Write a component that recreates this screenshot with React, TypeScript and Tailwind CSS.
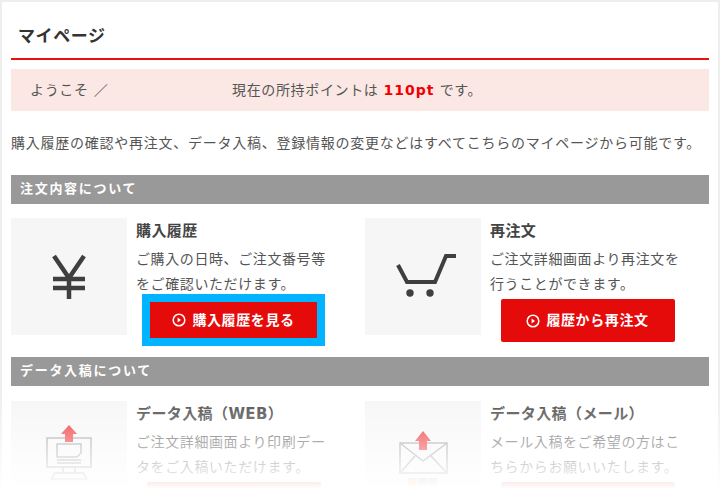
const BASE_FONT = '"DejaVu Sans","Noto Sans CJK JP",sans-serif';

const YenIcon = () => (
  <svg width="116" height="116" viewBox="0 0 116 116" fill="none" stroke="#3f3f3f" strokeWidth="4.5">
    <path d="M43 38 58 60 73 38M58 60V81M42 61H74M42 70H74" />
  </svg>
);

const CartIcon = () => (
  <svg width="116" height="116" viewBox="0 0 116 116" fill="none" stroke="#3f3f3f" strokeWidth="4">
    <path d="M33 47 42 64H70L81 38H91" />
    <circle cx="45" cy="75" r="3.7" fill="#3f3f3f" stroke="none" />
    <circle cx="65" cy="75" r="3.7" fill="#3f3f3f" stroke="none" />
  </svg>
);

const WebIcon = () => (
  <svg width="116" height="116" viewBox="0 0 116 116" fill="none" stroke="#999" strokeWidth="1.5">
    <rect x="36" y="37" width="44" height="29" />
    <path d="M46 43H70V52L66 56H46ZM46 59H70M46 62H70M52 66V72M64 66V72M40 78 44 72H72L76 78Z" />
    <path d="M58 24 66 33H62V41H54V33H50Z" fill="#ee2222" stroke="none" />
  </svg>
);

const MailIcon = () => (
  <svg width="116" height="116" viewBox="0 0 116 116" fill="none" stroke="#999" strokeWidth="1.5">
    <rect x="35" y="42" width="47" height="30" />
    <path d="M35 42 58 60 82 42M35 72 50 55M82 72 66 55" />
    <path d="M58 30 66 40H62V49H54V40H50Z" fill="#ee2222" stroke="none" />
    <rect x="43" y="77" width="9" height="8" fill="#f5a060" stroke="none" />
    <rect x="53" y="77" width="9" height="8" fill="#88aadd" stroke="none" />
    <rect x="63" y="77" width="9" height="8" fill="#99bb99" stroke="none" />
  </svg>
);

const PlayCircle = () => (
  <svg width="14" height="14" viewBox="0 0 14 14" fill="none" stroke="#fff" strokeWidth="1.5">
    <circle cx="7" cy="7" r="5.8" />
    <path d="M5.6 4.6 9 7 5.6 9.4Z" fill="#fff" stroke="none" />
  </svg>
);

type CardProps = {
  icon: React.ReactNode;
  title: string;
  text: string;
  button?: string;
  focused?: boolean;
};

const Card = ({ icon, title, text, button, focused }: CardProps) => (
  <div className="flex gap-[9px]">
    <div className="h-[117px] w-[116px] shrink-0 bg-[#f6f6f6]">{icon}</div>
    <div className="w-[195px]">
      <h3 className="text-[15px] leading-[26px] font-bold tracking-[0.4px] text-[#444]">{title}</h3>
      <p className="mt-[3px] text-[14px] leading-[25px] tracking-[0.6px] text-[#555]">{text}</p>
      {focused ? (
        <a className="mx-auto mt-[5px] flex h-[36px] w-[167px] items-center justify-center gap-[6px] bg-[#e60b0b] text-[14px] font-bold tracking-[0.6px] text-white outline-8 outline-[#00b4ff]">
          <PlayCircle />
          {button}
        </a>
      ) : (
        <a className="mx-auto mt-[2px] flex h-[43px] w-[174px] items-center justify-center gap-[6px] rounded-[2px] bg-[#e60b0b] text-[14px] font-bold tracking-[0.6px] text-white">
          {button && <PlayCircle />}
          {button}
        </a>
      )}
    </div>
  </div>
);

const SectionBar = ({ children }: { children: React.ReactNode }) => (
  <h2 className="h-[29px] bg-[#999] pl-[9px] text-[13px] leading-[28px] font-bold tracking-[1.7px] text-white">
    {children}
  </h2>
);

export default function App() {
  return (
    <div
      className="relative h-[500px] w-[720px] overflow-hidden bg-white"
      style={{ fontFamily: BASE_FONT }}
    >
      <div className="h-[520px] border-2 border-[#eee] px-[9px]">
        <h1 className="mt-[21px] h-[37px] border-b-2 border-[#e81010] pl-[7px] text-[17px] leading-[26px] font-bold tracking-[0.6px] text-[#333]">
          マイページ
        </h1>
        <div className="mt-[9px] flex h-[42px] items-center bg-[#fbe8e4] pl-[19px] text-[14px] tracking-[0.65px] text-[#555]">
          <span className="w-[202px]">ようこそ ／</span>
          <span>
            現在の所持ポイントは <strong className="text-[#f00000] tracking-[1px]">110pt</strong> です。
          </span>
        </div>
        <p className="mt-[20px] h-[44px] text-[14px] leading-[25px] tracking-[0.75px] text-[#555]">
          購入履歴の確認や再注文、データ入稿、登録情報の変更などはすべてこちらのマイページから可能です。
        </p>
        <SectionBar>注文内容について</SectionBar>
        <div className="mt-[14px] grid grid-cols-2 gap-x-[10px]">
          <Card
            icon={<YenIcon />}
            title="購入履歴"
            text="ご購入の日時、ご注文番号等をご確認いただけます。"
            button="購入履歴を見る"
            focused
          />
          <Card
            icon={<CartIcon />}
            title="再注文"
            text="ご注文詳細画面より再注文を行うことができます。"
            button="履歴から再注文"
          />
        </div>
        <div className="mt-[15px]">
          <SectionBar>データ入稿について</SectionBar>
        </div>
        <div className="mt-[15px] grid grid-cols-2 gap-x-[10px]">
          <Card
            icon={<WebIcon />}
            title="データ入稿（WEB）"
            text="ご注文詳細画面より印刷データをご入稿いただけます。"
          />
          <Card
            icon={<MailIcon />}
            title="データ入稿（メール）"
            text="メール入稿をご希望の方はこちらからお願いいたします。"
          />
        </div>
      </div>
      {/* fade over the bottom of the page */}
      <div className="absolute inset-x-0 bottom-0 h-[108px] bg-gradient-to-b from-white/0 to-white to-[90%]" />
    </div>
  );
}
